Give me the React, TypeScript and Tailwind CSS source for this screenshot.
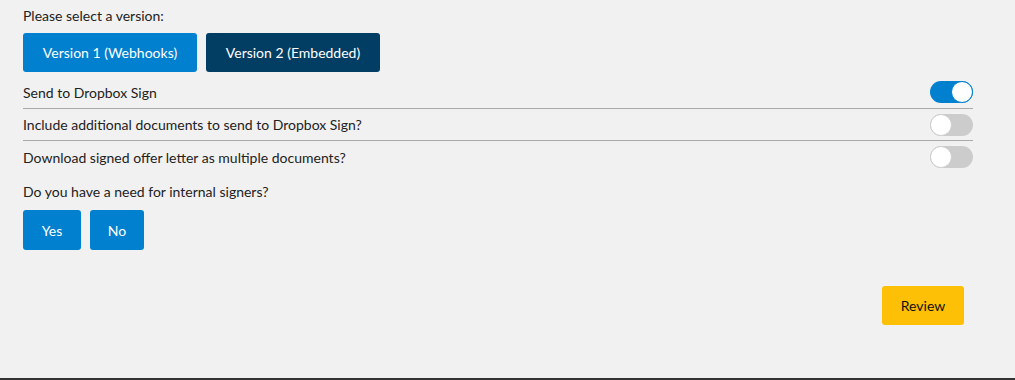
import React, { useState } from 'react'

const Toggle: React.FC<{ on: boolean; onChange: () => void }> = ({ on, onChange }) => (
  <button
    type="button"
    onClick={onChange}
    className={`relative w-[43px] h-[22px] rounded-full transition-colors ${on ? 'bg-[#0180cf]' : 'bg-[#cccccc]'}`}
  >
    <span
      className={`absolute top-0 h-[22px] w-[22px] rounded-full bg-white border ${
        on ? 'left-[21px] border-[#0180cf]' : 'left-0 border-[#cfcfcf]'
      }`}
    />
  </button>
)

export default function App() {
  const [send, setSend] = useState(true)
  const [extra, setExtra] = useState(false)
  const [multi, setMulti] = useState(false)

  const rows = [
    { label: 'Send to Dropbox Sign', on: send, set: () => setSend(!send), cls: 'h-[33px] border-b border-[#aaaaaa]' },
    { label: 'Include additional documents to send to Dropbox Sign?', on: extra, set: () => setExtra(!extra), cls: 'h-[32px] border-b border-[#aaaaaa]' },
    { label: 'Download signed offer letter as multiple documents?', on: multi, set: () => setMulti(!multi), cls: 'h-[32px]' }
  ]

  return (
    <div
      className="min-h-[380px] bg-[#f1f1f1] border-b-2 border-[#333333] text-[#222222] text-[14px] flex flex-col pl-[23px] pr-[42px] pt-[6px]"
      style={{ fontFamily: 'Lato, "Open Sans", sans-serif' }}
    >
      <p className="leading-5">Please select a version:</p>

      {/* Version buttons */}
      <div className="flex gap-[9px] mt-[7px]">
        <button type="button" className="w-[174px] h-[39px] rounded-[3px] bg-[#0180cf] text-white">
          Version 1 (Webhooks)
        </button>
        <button type="button" className="w-[174px] h-[39px] rounded-[3px] bg-[#023e64] text-white">
          Version 2 (Embedded)
        </button>
      </div>

      {/* Toggle rows */}
      <div className="mt-[4px]">
        {rows.map((r) => (
          <div key={r.label} className={`flex items-center justify-between ${r.cls}`}>
            <span>{r.label}</span>
            <Toggle on={r.on} onChange={r.set} />
          </div>
        ))}
      </div>

      <p className="leading-5 mt-[9px]">Do you have a need for internal signers?</p>

      <div className="flex gap-[9px] mt-[8px]">
        <button type="button" className="w-[58px] h-[40px] rounded-[3px] bg-[#0180cf] text-white">
          Yes
        </button>
        <button type="button" className="w-[54px] h-[40px] rounded-[3px] bg-[#0180cf] text-white">
          No
        </button>
      </div>

      <div className="flex justify-end mt-[36px] pr-[9px]">
        <button type="button" className="w-[82px] h-[39px] rounded-[3px] bg-[#fdc006] text-[#111111]">
          Review
        </button>
      </div>
    </div>
  )
}
